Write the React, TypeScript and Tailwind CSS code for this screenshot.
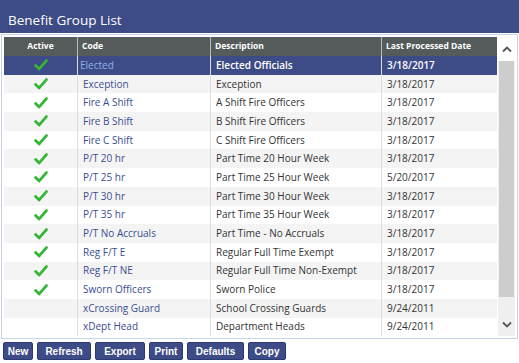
import React from 'react';

interface Group {
    active: boolean;
    code: string;
    description: string;
    date: string;
}

const groups: Group[] = [
    { active: true, code: 'Elected', description: 'Elected Officials', date: '3/18/2017' },
    { active: true, code: 'Exception', description: 'Exception', date: '3/18/2017' },
    { active: true, code: 'Fire A Shift', description: 'A Shift Fire Officers', date: '3/18/2017' },
    { active: true, code: 'Fire B Shift', description: 'B Shift Fire Officers', date: '3/18/2017' },
    { active: true, code: 'Fire C Shift', description: 'C Shift Fire Officers', date: '3/18/2017' },
    { active: true, code: 'P/T 20 hr', description: 'Part Time 20 Hour Week', date: '3/18/2017' },
    { active: true, code: 'P/T 25 hr', description: 'Part Time 25 Hour Week', date: '5/20/2017' },
    { active: true, code: 'P/T 30 hr', description: 'Part Time 30 Hour Week', date: '3/18/2017' },
    { active: true, code: 'P/T 35 hr', description: 'Part Time 35 Hour Week', date: '3/18/2017' },
    { active: true, code: 'P/T No Accruals', description: 'Part Time - No Accruals', date: '3/18/2017' },
    { active: true, code: 'Reg F/T E', description: 'Regular Full Time Exempt', date: '3/18/2017' },
    { active: true, code: 'Reg F/T NE', description: 'Regular Full Time Non-Exempt', date: '3/18/2017' },
    { active: true, code: 'Sworn Officers', description: 'Sworn Police', date: '3/18/2017' },
    { active: false, code: 'xCrossing Guard', description: 'School Crossing Guards', date: '9/24/2011' },
    { active: false, code: 'xDept Head', description: 'Department Heads', date: '9/24/2011' },
];

const buttons = [
    { label: 'New', w: 'w-[30px]' },
    { label: 'Refresh', w: 'w-[54px]' },
    { label: 'Export', w: 'w-[50px]' },
    { label: 'Print', w: 'w-[34px]' },
    { label: 'Defaults', w: 'w-[57px]' },
    { label: 'Copy', w: 'w-[38px]' },
];

const CheckMark = () => (
    <svg width="14" height="12" viewBox="0 0 14 12">
        <path d="M1.6 6.4 L5.2 9.9 L12.4 1.6" fill="none" stroke="#34b534" strokeWidth="2.8" strokeLinecap="round" strokeLinejoin="round" />
    </svg>
);

export default function App() {
    return (
        <div className="w-[519px] h-[363px] bg-white overflow-hidden" style={{ fontFamily: '"Open Sans", sans-serif' }}>
            {/* title bar */}
            <div className="h-[33px] bg-[#3d4b86] flex items-end px-2 pb-[3px]">
                <h1 className="text-white text-[13.5px] leading-[20px]">Benefit Group List</h1>
            </div>

            {/* grid */}
            <div className="mx-[1px] mt-[1px] border border-[#c9d6ea] p-[2px] flex">
                <div className="w-[496px]">
                    <div className="h-[19px] bg-[#555a5a] flex text-white text-[8.5px] font-bold items-stretch">
                        <div className="w-[74px] flex items-center justify-center border-r border-[#b8bcbc]">Active</div>
                        <div className="w-[133px] flex items-center pl-[4px] border-r border-[#b8bcbc]">Code</div>
                        <div className="w-[171px] flex items-center pl-[4px] border-r border-[#b8bcbc]">Description</div>
                        <div className="flex-1 flex items-center pl-[4px]">Last Processed Date</div>
                    </div>
                    {groups.map((g, i) => {
                        const selected = i === 0;
                        const rowBg = selected ? 'bg-[#3d4b86]' : i % 2 === 1 ? 'bg-[#f4f4f4]' : 'bg-white';
                        return (
                            <div key={g.code} className={`h-[18.7px] flex text-[10px] ${rowBg}`}>
                                <div className="w-[74px] flex items-center justify-center border-r border-[#dcdcdc]">
                                    {g.active && <CheckMark />}
                                </div>
                                <div
                                    className={`w-[133px] flex items-center border-r border-[#dcdcdc] ${selected ? 'pl-[2px] text-[#8fb2ea]' : 'pl-[5px] text-[#3a4d92]'}`}
                                >
                                    {g.code}
                                </div>
                                <div className={`w-[171px] flex items-center pl-[5px] border-r border-[#dcdcdc] ${selected ? 'text-white font-semibold' : 'text-[#333]'}`}>
                                    {g.description}
                                </div>
                                <div className={`flex-1 flex items-center pl-[5px] ${selected ? 'text-white font-semibold' : 'text-[#333]'}`}>
                                    {g.date}
                                </div>
                            </div>
                        );
                    })}
                </div>

                {/* scrollbar */}
                <div className="w-[17px] ml-[1px] bg-[#f0f0f0] flex flex-col items-center">
                    <div className="h-[24px] w-full bg-white flex items-center justify-center">
                        <svg width="10" height="7" viewBox="0 0 10 7">
                            <path d="M1 5.5 L5 1.5 L9 5.5" fill="none" stroke="#555" strokeWidth="1.8" />
                        </svg>
                    </div>
                    <div className="w-[15px] h-[236px] bg-[#cdcdcd]" />
                    <div className="flex-1" />
                    <div className="h-[24px] w-full flex items-center justify-center">
                        <svg width="10" height="7" viewBox="0 0 10 7">
                            <path d="M1 1.5 L5 5.5 L9 1.5" fill="none" stroke="#555" strokeWidth="1.8" />
                        </svg>
                    </div>
                </div>
            </div>

            {/* actions */}
            <div className="flex gap-[4px] px-[3px] mt-[3px]" style={{ fontFamily: '"Liberation Sans", Arial, sans-serif' }}>
                {buttons.map((b) => (
                    <button
                        key={b.label}
                        className={`${b.w} h-[18px] bg-[#3d4b86] border border-[#2c3870] rounded-[2px] text-white text-[10px] font-bold flex items-center justify-center`}
                    >
                        {b.label}
                    </button>
                ))}
            </div>
        </div>
    );
}
